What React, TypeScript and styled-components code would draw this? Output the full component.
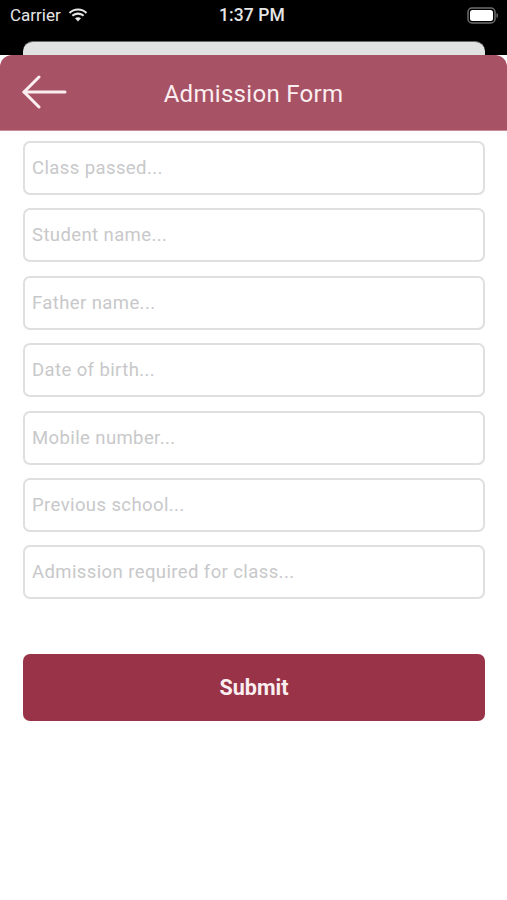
import React from "react";
import styled, { createGlobalStyle } from "styled-components";

const Global = createGlobalStyle`
  html, body { margin: 0; padding: 0; background: #fff; }
  * { box-sizing: border-box; }
  body { font-family: Roboto, "Liberation Sans", sans-serif; }
`;

const Page = styled.div`
  width: 507px;
  height: 900px;
  overflow: hidden;
  background: #fff;
  display: flex;
  flex-direction: column;
`;

const Top = styled.div`
  background: #000;
  height: 55px;
  display: flex;
  flex-direction: column;
`;

const StatusBar = styled.div`
  height: 41px;
  padding: 0 8px 11px 10px;
  display: grid;
  grid-template-columns: 1fr auto 1fr;
  align-items: center;
  color: #e6e6e6;
  font-size: 17px;
`;

const StatusLeft = styled.div`
  display: flex;
  align-items: center;
  gap: 7px;
`;

const StatusRight = styled.div`
  display: flex;
  justify-content: flex-end;
`;

const Time = styled.span`
  margin-right: 5px;
  font-size: 17.5px;
  font-weight: 500;
  letter-spacing: 0.1px;
`;

const PeekCard = styled.div`
  height: 14px;
  margin: 0 22px 0 23px;
  background: #e1e2e2;
  border-radius: 10px 10px 0 0;
  border-top: 1px solid #6a6a6a;
`;

const Header = styled.header`
  height: 76px;
  padding-top: 2px;
  background: #a85265;
  border-radius: 12px 12px 0 0;
  border-bottom: 1px solid #c98d98;
  position: relative;
  display: flex;
  align-items: center;
  justify-content: center;
`;

const Title = styled.h1`
  margin: 0;
  color: #fbeef0;
  font-size: 24px;
  font-weight: 400;
  letter-spacing: 0.3px;
`;

const Back = styled.button`
  position: absolute;
  left: 21px;
  top: 20px;
  width: 46px;
  height: 34px;
  padding: 0;
  background: none;
  border: 0;
  display: flex;
`;

const Form = styled.form`
  padding: 10px 22px 0 23px;
  display: flex;
  flex-direction: column;
  gap: 13.4px;
`;

const Field = styled.input`
  flex: none;
  height: 54px;
  width: 100%;
  padding: 0 7px;
  border: 2px solid #dfdfdf;
  border-radius: 7px;
  background: #fff;
  font-family: Roboto, "Liberation Sans", sans-serif;
  font-size: 18.5px;
  letter-spacing: 0.4px;
  outline: none;
  &::placeholder { color: #c8c8ca; opacity: 1; }
`;

const Submit = styled.button`
  margin-top: 41.2px;
  height: 67px;
  border: 0;
  border-radius: 7px;
  background: #983348;
  color: #fbeef0;
  font-family: Roboto, "Liberation Sans", sans-serif;
  font-size: 21.5px;
  font-weight: 700;
`;

const fields = [
  "Class passed...",
  "Student name...",
  "Father name...",
  "Date of birth...",
  "Mobile number...",
  "Previous school...",
  "Admission required for class...",
];

export default function App() {
  return (
    <Page>
      <Global />
      <Top>
        <StatusBar>
          <StatusLeft>
            <span>Carrier</span>
            <svg width="20" height="14" viewBox="0 0 20 14" fill="#e6e6e6">
              <path d="M10 2.6c3 0 5.8 1.2 7.8 3.1l1.4-1.5C16.800 1.900 13.600.5 10 .5S3.200 1.900.8 4.200l1.400 1.500C4.200 3.800 7 2.600 10 2.600z" />
              <path d="M10 6.700c1.900 0 3.600.7 4.900 1.900l1.400-1.500C14.600 5.500 12.400 4.600 10 4.600s-4.600.9-6.300 2.500l1.400 1.500c1.300-1.200 3-1.900 4.900-1.900z" />
              <path d="M7 10.300c.8-.7 1.900-1.100 3-1.100s2.200.4 3 1.100l-3 3.200z" />
            </svg>
          </StatusLeft>
          <Time>1:37 PM</Time>
          <StatusRight>
            <svg width="32" height="17" viewBox="0 0 32 17">
              <rect x="1" y="1" width="27" height="15" rx="4" fill="none" stroke="#6d6d6d" strokeWidth="1.500" />
              <rect x="3" y="3" width="23" height="11" rx="2.500" fill="#fff" />
              <path d="M29.500 6v5c1-.3 1.500-1.300 1.500-2.500S30.500 6.300 29.500 6z" fill="#6d6d6d" />
            </svg>
          </StatusRight>
        </StatusBar>
        <PeekCard />
      </Top>
      <Header>
        <Back type="button" aria-label="Back">
          <svg width="46" height="34" viewBox="0 0 46 34" fill="none" stroke="#fbeef0" strokeWidth="3" strokeLinecap="round" strokeLinejoin="round">
            <path d="M3 17h41" />
            <path d="M18 2L3 17l15 15" />
          </svg>
        </Back>
        <Title>Admission Form</Title>
      </Header>
      <Form onSubmit={(e) => e.preventDefault()}>
        {fields.map((f) => (
          <Field key={f} placeholder={f} />
        ))}
        <Submit type="submit">Submit</Submit>
      </Form>
    </Page>
  );
}
